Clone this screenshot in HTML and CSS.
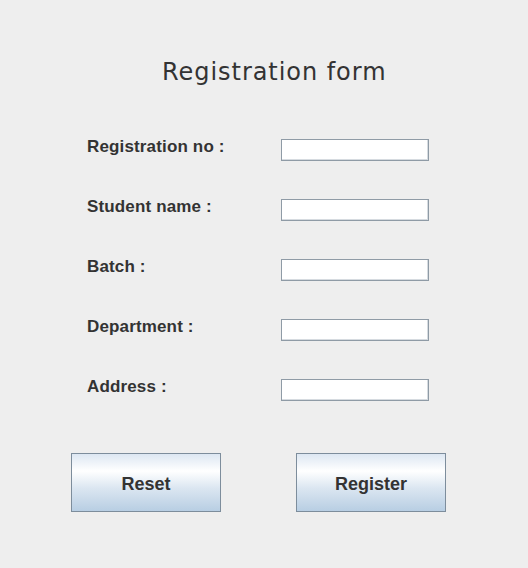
FILE: index.html
```html
<!DOCTYPE html>
<html>
<head>
<meta charset="utf-8">
<link rel="stylesheet" href="styles.css">
</head>
<body>
<div class="frame">
  <h1 class="title">Registration form</h1>
  <div class="rows">
    <div class="row"><span class="label">Registration no :</span><span class="field"></span></div>
    <div class="row"><span class="label">Student name :</span><span class="field"></span></div>
    <div class="row"><span class="label">Batch :</span><span class="field"></span></div>
    <div class="row"><span class="label">Department :</span><span class="field"></span></div>
    <div class="row"><span class="label">Address :</span><span class="field"></span></div>
  </div>
  <div class="buttons">
    <button class="btn">Reset</button>
    <button class="btn">Register</button>
  </div>
</div>
</body>
</html>
```
FILE: styles.css
```css
html, body {
  margin: 0;
  padding: 0;
  background: #eeeeee;
}
.frame {
  width: 528px;
  height: 568px;
  box-sizing: border-box;
  padding-top: 57px;
}
.title {
  margin: 0 0 0 162px;
  font-family: "DejaVu Sans", Verdana, sans-serif;
  font-weight: normal;
  font-size: 24px;
  letter-spacing: 0.95px;
  line-height: 30px;
  color: #333333;
}
.rows {
  margin-top: 52px;
  padding-left: 87px;
  display: flex;
  flex-direction: column;
  gap: 38px;
}
.row {
  display: flex;
  align-items: flex-start;
  height: 22px;
}
.label {
  width: 194px;
  font-family: "Liberation Sans", Arial, sans-serif;
  font-weight: bold;
  font-size: 17px;
  line-height: 16px;
  letter-spacing: 0.15px;
  color: #333333;
}
.field {
  width: 148px;
  height: 22px;
  box-sizing: border-box;
  background: #ffffff;
  border: 1px solid #8f9ba6;
  box-shadow: inset -1px -1px 0 #d6dbe0;
}
.buttons {
  margin-top: 52px;
  padding-left: 71px;
  display: flex;
  gap: 75px;
}
.btn {
  width: 150px;
  height: 59px;
  box-sizing: border-box;
  border: 1px solid #7d8d9c;
  background: linear-gradient(to bottom, #dde7f2 0%, #ffffff 30%, #dbe6f1 60%, #b8cee3 100%);
  font-family: "Liberation Sans", Arial, sans-serif;
  font-weight: bold;
  font-size: 18px;
  color: #333333;
  padding: 4px 0 0 0;
}
```
